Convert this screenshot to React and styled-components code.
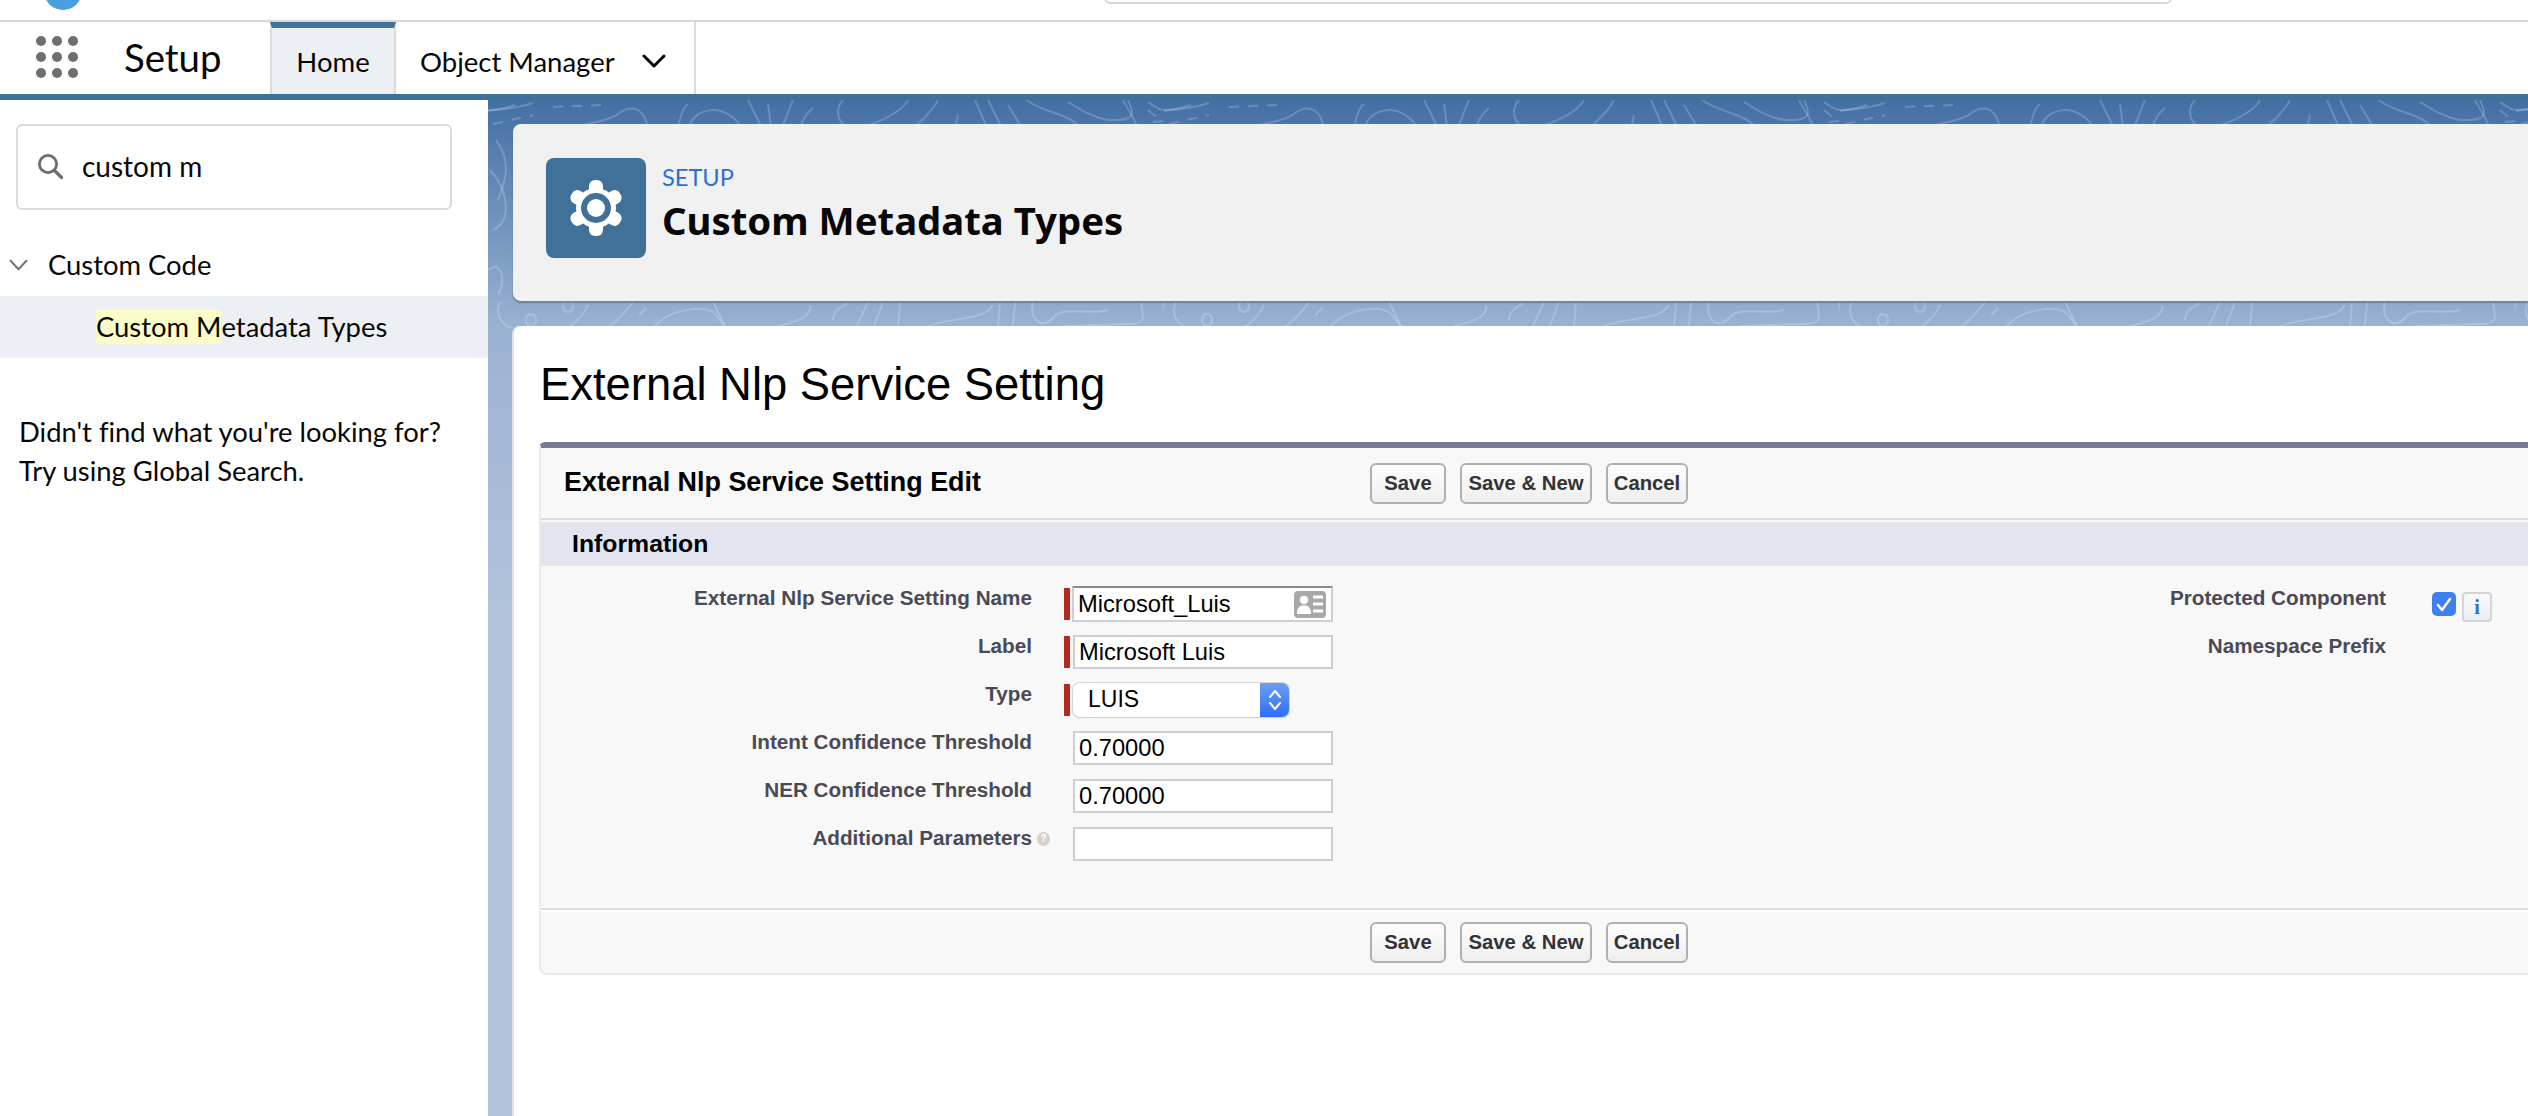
import React from "react";
import styled, { createGlobalStyle } from "styled-components";

const Global = createGlobalStyle`
  html, body { margin: 0; padding: 0; background: #fff; }
  * { box-sizing: border-box; }
`;
const SANS = `Lato, "Noto Sans", sans-serif`;
const ARIAL = `"Liberation Sans", Arial, sans-serif`;

const Page = styled.div`
  width: 2528px; height: 1116px; overflow: hidden; display: flex; flex-direction: column;
  font-family: ${SANS}; font-variant-ligatures: none; color: #080707; background: #fff;
`;
const TopStrip = styled.div`
  height: 22px; flex: none; display: flex; align-items: flex-end; overflow: hidden;
  padding-left: 44px; border-bottom: 2px solid #d8d8d8;
`;
const Avatar = styled.div`
  width: 38px; height: 38px; flex: none; border-radius: 50%; background: #4a9fdf; margin-bottom: 10px;
`;
const GlobalSearch = styled.div`
  width: 1068px; height: 40px; flex: none; margin-left: 1022px; margin-bottom: 16px;
  border: 2px solid #d8d8d8; border-radius: 6px;
`;
const Nav = styled.nav`
  height: 72px; flex: none; display: flex; align-items: stretch;
`;
const AppLauncher = styled.div`
  width: 124px; flex: none; display: flex; align-items: center; padding: 0 0 2px 36px;
`;
const AppName = styled.div`
  width: 146px; flex: none; font-size: 38.4px; display: flex; align-items: center; padding-bottom: 2px;
`;
const Tab = styled.div`
  display: flex; align-items: center; font-size: 27.5px; flex: none; padding-top: ${p => (p.$active ? 0 : 6)}px;
  width: ${p => p.$w}px;
  border-right: 2px solid #dddbda;
  border-left: ${p => (p.$active ? "2px solid #dddbda" : "none")};
  border-top: ${p => (p.$active ? "6px solid #3f7199" : "none")};
  background: ${p => (p.$active ? "#ecf0f4" : "#fff")};
  justify-content: ${p => (p.$active ? "center" : "flex-start")};
  padding-left: ${p => (p.$active ? 0 : 24)}px;
`;
const TabLabel = styled.span`
  width: 222px;
`;
const NavBand = styled.div`
  height: 6px; flex: none; background: #3f7199;
`;
const Body = styled.div`
  flex: 1; min-height: 0; display: flex;
`;
const Sidebar = styled.aside`
  width: 488px; flex: none; background: #fff; padding-top: 24px; font-size: 27.4px;
`;
const QuickFind = styled.div`
  width: 436px; height: 86px; margin-left: 16px; display: flex; align-items: center; gap: 19px;
  padding: 0 0 2px 19px; border: 2px solid #dddbda; border-radius: 6px; font-size: 28px;
`;
const TreeHead = styled.div`
  height: 62px; margin-top: 24px; display: flex; align-items: center; gap: 20px; padding: 0 0 1px 9px;
`;
const TreeLeaf = styled.div`
  height: 62px; display: flex; align-items: center; padding-left: 96px; background: #ecf0f4;
`;
const Mark = styled.mark`
  background: #fbfcc8; color: inherit; line-height: 34px; display: inline-block;
`;
const Note = styled.p`
  margin: 54px 0 0 19px; line-height: 39px;
`;
const Main = styled.main`
  flex: 1; min-width: 0; position: relative; display: flex; flex-direction: column;
  padding: 24px 0 0 24px;
  background: linear-gradient(#426fa4 0, #9ab2d2 226px, #b3c3dc 520px, #b3c3dc 100%);
`;
const Topography = styled.svg`
  position: absolute; left: 0; top: 0; width: 100%; height: 240px;
`;
const HeaderCard = styled.header`
  position: relative; height: 177px; flex: none; margin-left: 1px; display: flex; gap: 16px;
  padding: 34px 0 0 33px; background: #f1f1f1; border-radius: 8px 0 0 8px;
  box-shadow: 0 2px 2px rgba(70, 90, 120, 0.55);
`;
const Tile = styled.div`
  width: 100px; height: 100px; flex: none; border-radius: 8px; background: #3f7199;
  display: flex; align-items: center; justify-content: center;
`;
const Titles = styled.div`
  display: flex; flex-direction: column;
`;
const Eyebrow = styled.div`
  font-size: 23.6px; line-height: 38px; color: #2e6fd3;
`;
const PageTitle = styled.h1`
  margin: 0; font-family: "Noto Sans", sans-serif; font-size: 38.3px; line-height: 48px; font-weight: 700; color: #080707;
`;
const Content = styled.section`
  position: relative; flex: 1; min-height: 0; margin-top: 25px; padding: 33px 0 0 25px; background: #fff;
  border-left: 2px solid #e2e2e2; border-radius: 8px 0 0 0; font-family: ${ARIAL};
`;
const Heading = styled.h2`
  margin: 0 0 31px 1px; font-size: 45.4px; font-weight: 400; line-height: 52px; color: #000;
`;
const Panel = styled.div`
  margin-right: -12px; background: #f8f8f8; border-top: 6px solid #757e96;
  border-left: 2px solid #ebebeb; border-bottom: 2px solid #ebebeb; border-radius: 6px 0 0 8px;
`;
const PanelHead = styled.div`
  height: 72px; display: flex; align-items: center; padding-left: 23px;
  border-bottom: 2px solid #dcdcdc;
`;
const PanelTitle = styled.h3`
  margin: 0; width: 806px; flex: none; font-size: 26.9px; font-weight: 700; color: #000; padding-bottom: 2px;
`;
const Buttons = styled.div`
  display: flex; gap: 14px;
`;
const Button = styled.button`
  height: 41px; width: ${p => p.$w}px; padding: 0; font-family: ${ARIAL}; font-size: 20.3px; font-weight: 700;
  color: #333; border: 2px solid #b0b0b0; border-radius: 6px;
  background: linear-gradient(#fdfdfd, #efefef);
`;
const SectionBar = styled.div`
  height: 44px; margin-top: 2px; display: flex; align-items: center; padding-left: 31px;
  background: #e2e5ef; font-size: 24.8px; font-weight: 700; color: #000;
`;
const FormBody = styled.div`
  height: 344px; padding-top: 20px; display: flex; border-bottom: 2px solid #dcdcdc;
`;
const LeftCol = styled.div`
  width: 792px; flex: none;
`;
const Row = styled.div`
  height: 48px; display: flex;
`;
const FieldLabel = styled.label`
  width: ${p => p.$w}px; flex: none; text-align: right; font-size: 20.7px; font-weight: 700; color: #4a4a56;
  line-height: 24px;
`;
const Gutter = styled.div`
  width: 32px; flex: none; padding: 6px 0 0 5px;
`;
const Required = styled.div`
  width: 6px; height: 32px; flex: none; margin: 2px 3px 0 0;
  background: ${p => (p.$on ? "#b8281c" : "transparent")};
`;
const Input = styled.div`
  flex: none; display: flex; align-items: center; justify-content: space-between;
  padding: 0 5px 0 4px; background: #fff; font-size: 23.7px; color: #000;
  border: 2px solid #cfcfcf;
  border-top-color: ${p => (p.$focus ? "#8a8a8a" : "#cfcfcf")};
  height: ${p => (p.$focus ? 36 : 34)}px;
  margin: ${p => (p.$focus ? "0 0 0 -1px" : "1px 0 0")};
  width: ${p => (p.$focus ? 261 : 260)}px;
`;
const SelectBox = styled.div`
  width: 216px; height: 34px; margin-top: 1px; flex: none; display: flex; justify-content: space-between;
  background: #fff; border-radius: 7px; box-shadow: 0 0 0 1px #d4d4d4, 0 1px 1px #bbb;
  font-size: 23px; color: #000; overflow: hidden;
`;
const SelectText = styled.span`
  line-height: 33px; padding-left: 15px;
`;
const SelectArrows = styled.div`
  width: 29px; flex: none; display: flex; align-items: center; justify-content: center;
  background: linear-gradient(#6e9df2, #2a70f5);
`;
const HelpDot = styled.div`
  width: 13px; height: 14px; border-radius: 50%; background: #d8d1c6; color: #fff;
  font-size: 10px; font-weight: 700; line-height: 14px; text-align: center;
`;
const RightCol = styled.div`
  flex: 1;
`;
const CheckBox = styled.div`
  width: 24px; height: 24px; flex: none; margin: 6px 6px 0 46px; border-radius: 5px; background: #3f80f0;
  display: flex; align-items: center; justify-content: center;
`;
const InfoButton = styled.div`
  width: 30px; height: 30px; flex: none; margin-top: 6px; border: 2px solid #d4d4d4; border-radius: 4px;
  background: linear-gradient(#f9fafc, #e9eef5); color: #2d6fc4; text-align: center;
  font: 700 20px/26px "Liberation Serif", serif;
`;
const PanelFoot = styled.div`
  height: 63px; padding: 10px 0 0 829px; border-top: 2px solid #fff;
`;

const STROKE = "rgba(255,255,255,.19)";
const paths = [
  "M0 11 Q15 9 27 5", "M80 30 C100 22 120 22 130 14 C140 6 155 4 160 28",
  "M190 30 C192 15 195 8 200 4", "M200 30 C205 5 240 2 255 30", "M260 0 L275 30", "M280 4 L283 26",
  "M293 30 L305 0", "M312 30 C314 18 320 12 325 8", "M355 0 C345 10 350 30 370 28 C395 22 415 10 420 0",
  "M450 0 C445 10 430 25 420 32", "M470 15 L468 24", "M487 0 L500 30", "M500 0 L515 30", "M520 5 L535 30",
  "M538 0 C560 15 580 12 595 30", "M580 2 C600 15 620 25 640 18 C648 15 642 5 640 0", "M635 0 C640 10 648 20 650 30",
  "M660 2 C668 8 672 10 676 10", "M0 10 C15 10 30 8 45 3",
  "M100 205 C96 215 88 222 80 228", "M145 202 C138 212 130 220 120 228",
  "M165 228 C180 210 210 205 225 212 C232 218 235 225 238 228", "M225 202 L238 228",
  "M290 226 C310 222 325 215 322 205", "M345 220 C345 212 350 208 360 203", "M368 228 L380 202", "M385 228 L395 202",
  "M410 228 L412 202", "M435 228 C465 215 495 222 505 205", "M510 226 L512 202", "M525 226 L527 202",
  "M545 202 C540 220 555 230 565 218 C575 205 600 216 620 210", "M575 226 L640 224 C660 224 655 215 653 202",
  "M675 202 L680 228", "M5 130 C25 120 20 90 2 70", "M8 40 C22 60 20 75 10 100", "M12 202 C6 215 14 225 24 228",
  "M0 170 C14 160 18 180 10 195",
];
const dashed = ["M65 7 L115 5", "M5 24 L45 15", "M665 22 L730 15", "M158 208 L145 222", "M660 10 L672 20"];

const Pattern = () => (
  <Topography aria-hidden="true">
    <defs>
      <pattern id="topo" x="0" y="0" width="676" height="240" patternUnits="userSpaceOnUse">
        {paths.map(d => <path key={d} d={d} fill="none" stroke={STROKE} strokeWidth="2" />)}
        {dashed.map(d => <path key={d} d={d} fill="none" stroke={STROKE} strokeWidth="2" strokeDasharray="10 9" />)}
        <ellipse cx="80" cy="206" rx="5" ry="6" fill="none" stroke={STROKE} strokeWidth="2" />
        <ellipse cx="43" cy="220" rx="5" ry="6" fill="none" stroke={STROKE} strokeWidth="2" />
      </pattern>
    </defs>
    <rect width="100%" height="100%" fill="url(#topo)" />
  </Topography>
);

const Dots = () => (
  <svg width="42" height="42" viewBox="0 0 42 42">
    {[5, 21, 37].flatMap(y => [5, 21, 37].map(x => <circle key={`${x}-${y}`} cx={x} cy={y} r="5" fill="#706e6b" />))}
  </svg>
);
const Chevron = ({ w, h, color, sw }) => (
  <svg width={w} height={h} viewBox="0 0 24 14" preserveAspectRatio="none">
    <path d="M2 2 L12 12 L22 2" fill="none" stroke={color} strokeWidth={sw} strokeLinecap="round" strokeLinejoin="round" />
  </svg>
);
const SearchIcon = () => (
  <svg width="26" height="26" viewBox="0 0 26 26">
    <circle cx="11" cy="11" r="8.6" fill="none" stroke="#706e6b" strokeWidth="2.8" />
    <path d="M17.5 17.5 L24.5 24.5" stroke="#706e6b" strokeWidth="3.2" strokeLinecap="round" />
  </svg>
);
const Gear = () => (
  <svg width="54" height="56" viewBox="-27 -28 54 56">
    {[0, 60, 120, 180, 240, 300].map(a => (
      <rect key={a} x="-7" y="-28" width="14" height="16" rx="6" fill="#fff" transform={`rotate(${a})`} />
    ))}
    <circle r="20" fill="#fff" />
    <circle r="15" fill="#3f7199" />
    <circle r="9" fill="#fff" />
  </svg>
);
const LookupIcon = () => (
  <svg width="32" height="27" viewBox="0 0 32 27">
    <rect width="32" height="27" rx="4" fill="#a8a8a8" />
    <circle cx="10" cy="9" r="4.2" fill="#fff" />
    <path d="M3 23 C3 16 6 14.5 10 14.5 C14 14.5 17 16 17 23 Z" fill="#fff" />
    <path d="M19 6 H29 M19 13 H29 M19 20 H29" stroke="#fff" strokeWidth="3" />
  </svg>
);
const Arrows = () => (
  <svg width="14" height="24" viewBox="0 0 14 24">
    <path d="M2 9 L7 3 L12 9 M2 15 L7 21 L12 15" fill="none" stroke="#fff" strokeWidth="2" strokeLinecap="round" strokeLinejoin="round" />
  </svg>
);
const Check = () => (
  <svg width="16" height="15" viewBox="0 0 16 15">
    <path d="M2 8 L6 13 L14 2" fill="none" stroke="#fff" strokeWidth="2.4" strokeLinecap="round" strokeLinejoin="round" />
  </svg>
);

const ActionButtons = () => (
  <Buttons>
    <Button $w={76}>Save</Button>
    <Button $w={132}>Save &amp; New</Button>
    <Button $w={82}>Cancel</Button>
  </Buttons>
);

export default function App() {
  return (
    <Page>
      <Global />
      <TopStrip>
        <Avatar />
        <GlobalSearch />
      </TopStrip>
      <Nav>
        <AppLauncher><Dots /></AppLauncher>
        <AppName>Setup</AppName>
        <Tab $active $w={126}>Home</Tab>
        <Tab $w={300}>
          <TabLabel>Object Manager</TabLabel>
          <Chevron w={24} h={14} color="#080707" sw={3} />
        </Tab>
      </Nav>
      <NavBand />
      <Body>
        <Sidebar>
          <QuickFind><SearchIcon />custom m</QuickFind>
          <TreeHead>
            <Chevron w={19} h={12} color="#706e6b" sw={2.4} />
            Custom Code
          </TreeHead>
          <TreeLeaf><span><Mark>Custom M</Mark>etadata Types</span></TreeLeaf>
          <Note>Didn't find what you're looking for?<br />Try using Global Search.</Note>
        </Sidebar>
        <Main>
          <Pattern />
          <HeaderCard>
            <Tile><Gear /></Tile>
            <Titles>
              <Eyebrow>SETUP</Eyebrow>
              <PageTitle>Custom Metadata Types</PageTitle>
            </Titles>
          </HeaderCard>
          <Content>
            <Heading>External Nlp Service Setting</Heading>
            <Panel>
              <PanelHead>
                <PanelTitle>External Nlp Service Setting Edit</PanelTitle>
                <ActionButtons />
              </PanelHead>
              <SectionBar>Information</SectionBar>
              <FormBody>
                <LeftCol>
                  <Row>
                    <FieldLabel $w={491}>External Nlp Service Setting Name</FieldLabel>
                    <Gutter />
                    <Required $on />
                    <Input $focus>Microsoft_Luis<LookupIcon /></Input>
                  </Row>
                  <Row>
                    <FieldLabel $w={491}>Label</FieldLabel>
                    <Gutter />
                    <Required $on />
                    <Input>Microsoft Luis</Input>
                  </Row>
                  <Row>
                    <FieldLabel $w={491}>Type</FieldLabel>
                    <Gutter />
                    <Required $on />
                    <SelectBox><SelectText>LUIS</SelectText><SelectArrows><Arrows /></SelectArrows></SelectBox>
                  </Row>
                  <Row>
                    <FieldLabel $w={491}>Intent Confidence Threshold</FieldLabel>
                    <Gutter />
                    <Required />
                    <Input>0.70000</Input>
                  </Row>
                  <Row>
                    <FieldLabel $w={491}>NER Confidence Threshold</FieldLabel>
                    <Gutter />
                    <Required />
                    <Input>0.70000</Input>
                  </Row>
                  <Row>
                    <FieldLabel $w={491}>Additional Parameters</FieldLabel>
                    <Gutter><HelpDot>?</HelpDot></Gutter>
                    <Required />
                    <Input />
                  </Row>
                </LeftCol>
                <RightCol>
                  <Row>
                    <FieldLabel $w={1053}>Protected Component</FieldLabel>
                    <CheckBox><Check /></CheckBox>
                    <InfoButton>i</InfoButton>
                  </Row>
                  <Row>
                    <FieldLabel $w={1053}>Namespace Prefix</FieldLabel>
                  </Row>
                </RightCol>
              </FormBody>
              <PanelFoot><ActionButtons /></PanelFoot>
            </Panel>
          </Content>
        </Main>
      </Body>
    </Page>
  );
}
